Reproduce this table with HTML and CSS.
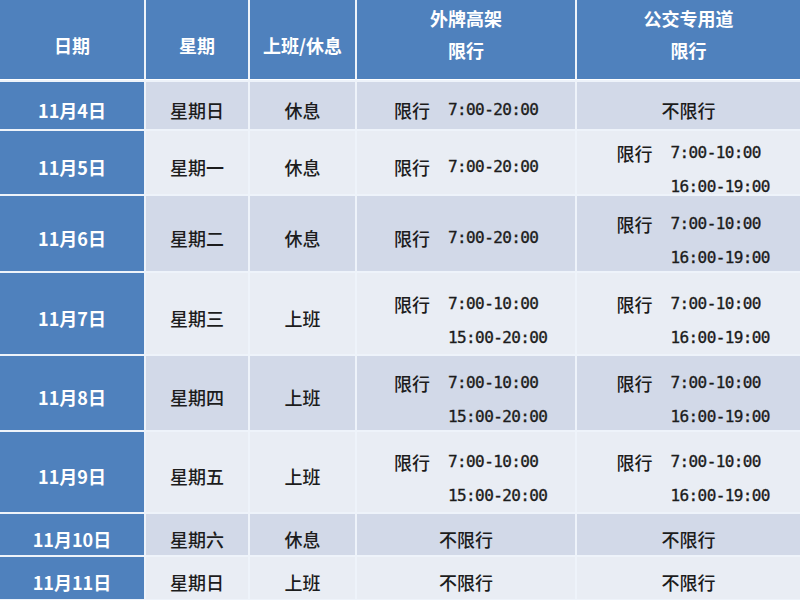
FILE: index.html
```html
<!DOCTYPE html>
<html lang="zh-CN">
<head>
<meta charset="utf-8">
<title>限行安排</title>
<link rel="stylesheet" href="styles.css">
</head>
<body>
<div class="table">
  <div class="hd one">日期</div>
  <div class="hd one">星期</div>
  <div class="hd one">上班/休息</div>
  <div class="hd two">外牌高架<br>限行</div>
  <div class="hd two">公交专用道<br>限行</div>

  <div class="date">11月4日</div>
  <div class="c odd">星期日</div>
  <div class="c odd">休息</div>
  <div class="c odd"><div class="sched"><span class="lb">限行</span><span class="tm">7:00-20:00</span></div></div>
  <div class="c odd">不限行</div>

  <div class="date">11月5日</div>
  <div class="c even">星期一</div>
  <div class="c even">休息</div>
  <div class="c even"><div class="sched"><span class="lb">限行</span><span class="tm">7:00-20:00</span></div></div>
  <div class="c even"><div class="sched multi"><span class="lb">限行</span><span class="tm">7:00-10:00</span><span class="tm tm2">16:00-19:00</span></div></div>

  <div class="date">11月6日</div>
  <div class="c odd">星期二</div>
  <div class="c odd">休息</div>
  <div class="c odd"><div class="sched"><span class="lb">限行</span><span class="tm">7:00-20:00</span></div></div>
  <div class="c odd"><div class="sched multi"><span class="lb">限行</span><span class="tm">7:00-10:00</span><span class="tm tm2">16:00-19:00</span></div></div>

  <div class="date">11月7日</div>
  <div class="c even">星期三</div>
  <div class="c even">上班</div>
  <div class="c even"><div class="sched multi"><span class="lb">限行</span><span class="tm">7:00-10:00</span><span class="tm tm2">15:00-20:00</span></div></div>
  <div class="c even"><div class="sched multi"><span class="lb">限行</span><span class="tm">7:00-10:00</span><span class="tm tm2">16:00-19:00</span></div></div>

  <div class="date">11月8日</div>
  <div class="c odd">星期四</div>
  <div class="c odd">上班</div>
  <div class="c odd"><div class="sched multi"><span class="lb">限行</span><span class="tm">7:00-10:00</span><span class="tm tm2">15:00-20:00</span></div></div>
  <div class="c odd"><div class="sched multi"><span class="lb">限行</span><span class="tm">7:00-10:00</span><span class="tm tm2">16:00-19:00</span></div></div>

  <div class="date">11月9日</div>
  <div class="c even">星期五</div>
  <div class="c even">上班</div>
  <div class="c even"><div class="sched multi"><span class="lb">限行</span><span class="tm">7:00-10:00</span><span class="tm tm2">15:00-20:00</span></div></div>
  <div class="c even"><div class="sched multi"><span class="lb">限行</span><span class="tm">7:00-10:00</span><span class="tm tm2">16:00-19:00</span></div></div>

  <div class="date">11月10日</div>
  <div class="c odd">星期六</div>
  <div class="c odd">休息</div>
  <div class="c odd">不限行</div>
  <div class="c odd">不限行</div>

  <div class="date">11月11日</div>
  <div class="c even">星期日</div>
  <div class="c even">上班</div>
  <div class="c even">不限行</div>
  <div class="c even">不限行</div>
</div>
</body>
</html>
```

FILE: styles.css
```css
html, body {
  margin: 0;
  padding: 0;
  background: #eef3fa;
}

.table {
  width: 800px;
  height: 600px;
  display: grid;
  grid-template-columns: 144px 102px 105px 218px 223px;
  grid-template-rows: 80px 47px 63px 75px 81px 74px 80px 41px 42px;
  column-gap: 2px;
  row-gap: 2px;
  background: #eef3fa;
  overflow: hidden;
  font-family: "Noto Sans CJK SC", "Noto Sans", sans-serif;
  font-size: 18px;
}

.hd {
  background: #4f81bd;
  color: #ffffff;
  font-weight: 700;
  display: flex;
  align-items: center;
  justify-content: center;
  text-align: center;
  border-bottom: 1px solid #ffffff;
}

.hd.one {
  padding-top: 10px;
}

.hd.two {
  line-height: 32px;
  padding-bottom: 11px;
}

.date {
  background: #4f81bd;
  color: #ffffff;
  font-weight: 700;
  display: flex;
  align-items: center;
  justify-content: center;
  padding-top: 8px;
}

.c {
  color: #1c1c1c;
  font-weight: 500;
  display: flex;
  align-items: center;
  justify-content: center;
  padding-top: 8px;
  min-width: 0;
}

.odd {
  background: #d2d9e8;
}

.even {
  background: #e9edf4;
}

.sched {
  display: grid;
  grid-template-columns: 36px 90px;
  column-gap: 18px;
  align-items: center;
}

.sched.multi {
  line-height: 34px;
  margin-top: 6px;
}

.lb {
  grid-column: 1;
  white-space: nowrap;
}

.tm {
  grid-column: 2;
  font-family: "DejaVu Sans Mono", "Liberation Mono", monospace;
  font-size: 16px;
  letter-spacing: -0.6px;
  white-space: nowrap;
  color: #1c1c1c;
  -webkit-text-stroke: 0.35px #1c1c1c;
}

.tm2 {
  grid-row: 2;
}
```
